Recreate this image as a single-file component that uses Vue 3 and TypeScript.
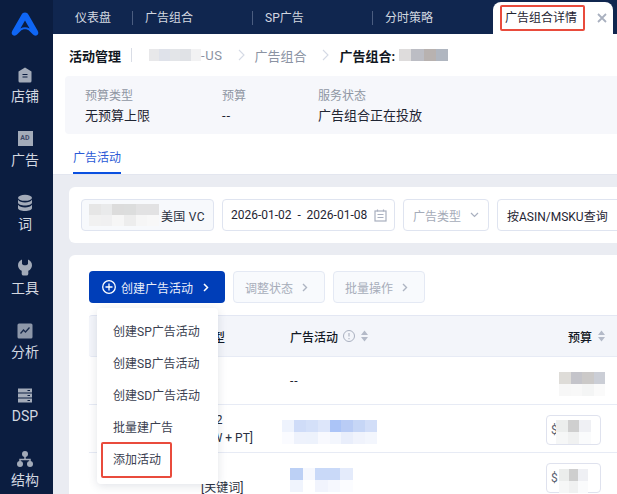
<script setup lang="ts">
const navTabs = ['仪表盘', '广告组合', 'SP广告', '分时策略']
const menu = ['创建SP广告活动', '创建SB广告活动', '创建SD广告活动', '批量建广告', '添加活动']

type Mosaic = { cols: number; w: number; h: number; cells: string[] }
const crumbBlur: Mosaic = { cols: 5, w: 10.4, h: 12, cells: ['#e8e8ea', '#dfe2ea', '#e3e5e8', '#e0e2e6', '#f2f2f3'] }
const groupBlur: Mosaic = { cols: 4, w: 12.25, h: 12, cells: ['#dedcdc', '#bcbdc4', '#b8b2b0', '#b0b6c0'] }
const storeBlur: Mosaic = {
  cols: 6, w: 11.67, h: 11,
  cells: ['#e6e6e6', '#e9eaeb', '#dcdcdc', '#dcdddd', '#e2e2e3', '#e2e2e3', '#f1f1f1', '#f0f0f1', '#f6f6f6', '#ededed', '#f6f6f6', '#f8f8f8']
}
const rowOneBudget: Mosaic = {
  cols: 4, w: 11.5, h: 12,
  cells: ['#dedcd8', '#c4c4ca', '#cbc9c8', '#cbced6', '#f7f7f7', '#f8f8f8', '#f4f5f5', '#fafafa']
}
const rowTwoName: Mosaic = {
  cols: 8, w: 11.9, h: 12,
  cells: ['#eef3fd', '#cfdcf8', '#d4e0f9', '#dde6fa', '#abc4f7', '#b9ccf5', '#c6d6f6', '#d2def8',
    '#fafbff', '#eef2fc', '#edf2fc', '#f8f9fe', '#f3f6fd', '#e9eefb', '#f0f3fc', '#f3f6fd']
}
const rowThreeName: Mosaic = {
  cols: 5, w: 12.6, h: 12,
  cells: ['#bcd0f5', '#f6f8fe', '#c9d9f8', '#c9d9f8', '#e4ebfb', '#f0f4fd', '#ffffff', '#f1f4fd', '#f6f8fe', '#fbfcff']
}
const budgetTwo: Mosaic = {
  cols: 3, w: 11.67, h: 12,
  cells: ['#eceeed', '#cfcfcf', '#eff0f4', '#f6f7f7', '#f0f1f1', '#fafbfc']
}
const budgetThree: Mosaic = {
  cols: 3, w: 9.5, h: 12,
  cells: ['#ebedec', '#cecece', '#eff0f4', '#f6f7f7', '#f0f1f1', '#fafbfc']
}
</script>

<template>
  <div class="app">
    <aside class="side">
      <div class="logo">
        <svg width="28" height="24" viewBox="0 0 28 24">
          <path d="M14 0.5c-1.6 0-2.7.8-3.5 2.3L1.3 18.8c-1.2 2.2-.6 4.1 1.2 4.7 1.5.5 2.7-.2 3.8-1.3l3-3c2.700-2.600 6.700-2.600 9.400 0l3 3c1.100 1.100 2.300 1.800 3.800 1.300 1.800-.6 2.400-2.500 1.200-4.700L17.500 2.800C16.700 1.300 15.600.5 14 .5zM14 8.500l4.600 8c-2.900-1.600-6.300-1.600-9.200 0z" fill="#0f66f5" fill-rule="evenodd" />
        </svg>
      </div>
      <div class="side-item">
        <svg class="ic" viewBox="0 0 18 18"><path d="M9 1.500 15.500 5.500V15a1.500 1.500 0 0 1-1.500 1.500H4A1.500 1.500 0 0 1 2.500 15V5.500z" fill="#a3abb9" /><path d="M6.500 8.500h5M6.500 11h5" stroke="#0b1d40" stroke-width="1.100" /></svg>
        <span>店铺</span>
      </div>
      <div class="side-item">
        <div class="ad-ic">AD</div>
        <span>广告</span>
      </div>
      <div class="side-item">
        <svg class="ic" viewBox="0 0 18 18" fill="#a3abb9"><ellipse cx="9" cy="3.800" rx="7" ry="3" /><path d="M2 5.800c1.200 1.800 3.800 2.700 7 2.700s5.800-.9 7-2.700v2.700c0 1.800-3.100 3.100-7 3.100s-7-1.300-7-3.100z" /><path d="M2 10.800c1.200 1.800 3.800 2.700 7 2.700s5.800-.9 7-2.700v3.200c0 1.800-3.100 3-7 3s-7-1.200-7-3z" /></svg>
        <span>词</span>
      </div>
      <div class="side-item">
        <svg class="ic" viewBox="0 0 18 18" fill="#a3abb9"><path d="M6 1.500v4.200c0 .8 1.300 1.500 3 1.500s3-.7 3-1.500V1.500c2.300.9 4 3.100 4 5.700 0 2.500-1.500 4.600-3.700 5.600V16a1.800 1.800 0 0 1-1.800 1.500h-3A1.800 1.800 0 0 1 5.700 16v-3.200C3.500 11.800 2 9.700 2 7.200c0-2.600 1.700-4.800 4-5.700z" /></svg>
        <span>工具</span>
      </div>
      <div class="side-item">
        <svg class="ic" viewBox="0 0 18 18"><rect x="1.500" y="1.500" width="15" height="15" rx="1.500" fill="#8d97a9" /><path d="M4.500 11.500 7.500 8l2 2 4-4.500" fill="none" stroke="#1a2b4c" stroke-width="1.300" /></svg>
        <span>分析</span>
      </div>
      <div class="side-item">
        <svg class="ic" viewBox="0 0 18 18" fill="#a3abb9"><path d="M2 2.500h14v4H2zM2 7.500h14v4H2zM2 12.500h14v4H2z" /><path d="M11.500 4.500h2.500M11.500 9.500h2.500M11.500 14.500h2.500" stroke="#0b1d40" stroke-width="1.200" /></svg>
        <span>DSP</span>
      </div>
      <div class="side-item">
        <svg class="ic" viewBox="0 0 18 18" fill="#a3abb9"><circle cx="9" cy="4" r="3" /><circle cx="4" cy="14" r="3" /><circle cx="14" cy="14" r="3" /><path d="M9 6v3M4 12V9.500h10V12" fill="none" stroke="#a3abb9" stroke-width="1.500" /></svg>
        <span>结构</span>
      </div>
    </aside>

    <div class="main">
      <nav class="tabs">
        <div v-for="t in navTabs" :key="t" class="tab">{{ t }}</div>
        <div class="tab-active">
          <span>广告组合详情</span>
          <svg class="tab-x" width="10" height="10" viewBox="0 0 10 10"><path d="M1 1l8 8M9 1l-8 8" stroke="#a9b0bf" stroke-width="1.800" /></svg>
          <i class="redbox tab-red"></i>
        </div>
      </nav>

      <div class="crumbs">
        <b class="crumb-title">活动管理</b>
        <i class="vline"></i>
        <div class="mosaic" :style="{ gridTemplateColumns: `repeat(${crumbBlur.cols}, ${crumbBlur.w}px)`, gridAutoRows: `${crumbBlur.h}px` }">
          <i v-for="(c, i) in crumbBlur.cells" :key="i" :style="{ background: c }"></i>
        </div>
        <span class="crumb-muted us">-US</span>
        <svg class="chev" width="7" height="12" viewBox="0 0 7 12"><path d="M1 1l5 5-5 5" fill="none" stroke="#d5dae5" stroke-width="1.100" /></svg>
        <span class="crumb-muted">广告组合</span>
        <svg class="chev" width="7" height="12" viewBox="0 0 7 12"><path d="M1 1l5 5-5 5" fill="none" stroke="#d5dae5" stroke-width="1.100" /></svg>
        <b class="crumb-cur">广告组合:</b>
        <div class="mosaic" :style="{ gridTemplateColumns: `repeat(${groupBlur.cols}, ${groupBlur.w}px)`, gridAutoRows: `${groupBlur.h}px` }">
          <i v-for="(c, i) in groupBlur.cells" :key="i" :style="{ background: c }"></i>
        </div>
      </div>

      <section class="info">
        <div class="info-col c1"><label>预算类型</label><p>无预算上限</p></div>
        <div class="info-col c2"><label>预算</label><p class="dashes">--</p></div>
        <div class="info-col"><label>服务状态</label><p>广告组合正在投放</p></div>
      </section>

      <div class="subtabs"><span class="subtab">广告活动</span></div>

      <div class="body">
        <section class="filter card">
          <div class="store">
            <div class="mosaic" :style="{ gridTemplateColumns: `repeat(${storeBlur.cols}, ${storeBlur.w}px)`, gridAutoRows: `${storeBlur.h}px` }">
              <i v-for="(c, i) in storeBlur.cells" :key="i" :style="{ background: c }"></i>
            </div>
            <span class="store-name">美国 VC</span>
          </div>
          <div class="field date">
            <span>2026-01-02</span><span class="dash">-</span><span>2026-01-08</span>
            <svg class="cal" width="13" height="13" viewBox="0 0 13 13" fill="none" stroke="#a9b0bf" stroke-width="1.200"><rect x="1" y="2" width="11" height="10" /><path d="M3.500 0.500v2M9.500 .5v2M3.500 5.500h6M3.500 8.500h6" /></svg>
          </div>
          <div class="field type">
            <span>广告类型</span>
            <svg width="9" height="6" viewBox="0 0 9 6"><path d="M1 1l3.500 3.500L8 1" fill="none" stroke="#a9b0bf" stroke-width="1.200" /></svg>
          </div>
          <div class="field query">按ASIN/MSKU查询</div>
        </section>

        <section class="table-card card">
          <div class="actions">
            <button class="primary">
              <svg width="14" height="14" viewBox="0 0 14 14" fill="none" stroke="#fff" stroke-width="1.300"><circle cx="7" cy="7" r="6.300" /><path d="M7 3.500v7M3.500 7h7" /></svg>
              <span>创建广告活动</span>
              <svg class="bchev" width="6" height="9" viewBox="0 0 6 9"><path d="M1 1l3.500 3.500L1 8" fill="none" stroke="#fff" stroke-width="1.500" /></svg>
            </button>
            <button class="ghost">
              <span>调整状态</span>
              <svg width="6" height="9" viewBox="0 0 6 9"><path d="M1 1l3.500 3.500L1 8" fill="none" stroke="#aeb5c2" stroke-width="1.400" /></svg>
            </button>
            <button class="ghost">
              <span>批量操作</span>
              <svg width="6" height="9" viewBox="0 0 6 9"><path d="M1 1l3.500 3.500L1 8" fill="none" stroke="#aeb5c2" stroke-width="1.400" /></svg>
            </button>
          </div>

          <div class="table">
            <div class="row head">
              <div></div>
              <div class="th">类型</div>
              <div class="th">
                广告活动
                <svg class="help" width="12" height="12" viewBox="0 0 12 12" fill="none" stroke="#a9b0bf"><circle cx="6" cy="6" r="5.500" /><path d="M6 3v3.500M6 8v1.200" stroke-width="1.100" /></svg>
                <svg class="sort" width="7" height="12" viewBox="0 0 7 12" fill="#b4bac8"><path d="M3.500 .5 7 5H0zM3.500 11.500 0 7h7z" /></svg>
              </div>
              <div class="th right head-budget">
                预算
                <svg class="sort" width="7" height="12" viewBox="0 0 7 12" fill="#b4bac8"><path d="M3.500 .5 7 5H0zM3.500 11.500 0 7h7z" /></svg>
              </div>
            </div>
            <div class="row r1">
              <div></div>
              <div></div>
              <div class="td dashes">--</div>
              <div class="td right r1-budget">
                <div class="mosaic" :style="{ gridTemplateColumns: `repeat(${rowOneBudget.cols}, ${rowOneBudget.w}px)`, gridAutoRows: `${rowOneBudget.h}px` }">
                  <i v-for="(c, i) in rowOneBudget.cells" :key="i" :style="{ background: c }"></i>
                </div>
              </div>
            </div>
            <div class="row r2">
              <div></div>
              <div class="td stack"><span>SP2</span><span>[KW + PT]</span></div>
              <div class="td name-two">
                <div class="mosaic" :style="{ gridTemplateColumns: `repeat(${rowTwoName.cols}, ${rowTwoName.w}px)`, gridAutoRows: `${rowTwoName.h}px` }">
                  <i v-for="(c, i) in rowTwoName.cells" :key="i" :style="{ background: c }"></i>
                </div>
              </div>
              <div class="td right budget-cell">
                <div class="money">
                  <span class="dollar">$</span>
                  <div class="mosaic" :style="{ gridTemplateColumns: `repeat(${budgetTwo.cols}, ${budgetTwo.w}px)`, gridAutoRows: `${budgetTwo.h}px` }">
                    <i v-for="(c, i) in budgetTwo.cells" :key="i" :style="{ background: c }"></i>
                  </div>
                </div>
              </div>
            </div>
            <div class="row r3">
              <div></div>
              <div class="td stack"><span>SP</span><span>[关键词]</span></div>
              <div class="td name-three">
                <div class="mosaic" :style="{ gridTemplateColumns: `repeat(${rowThreeName.cols}, ${rowThreeName.w}px)`, gridAutoRows: `${rowThreeName.h}px` }">
                  <i v-for="(c, i) in rowThreeName.cells" :key="i" :style="{ background: c }"></i>
                </div>
              </div>
              <div class="td right budget-cell">
                <div class="money">
                  <span class="dollar wide">$</span>
                  <div class="mosaic" :style="{ gridTemplateColumns: `repeat(${budgetThree.cols}, ${budgetThree.w}px)`, gridAutoRows: `${budgetThree.h}px` }">
                    <i v-for="(c, i) in budgetThree.cells" :key="i" :style="{ background: c }"></i>
                  </div>
                </div>
              </div>
            </div>
          </div>

          <div class="menu">
            <div v-for="m in menu" :key="m" class="menu-item">{{ m }}</div>
            <i class="redbox menu-red"></i>
          </div>
        </section>
      </div>
    </div>
  </div>
</template>

<style>
html, body { margin: 0; overflow: hidden; }
</style>

<style scoped>
.app {
  display: flex;
  width: 617px;
  height: 494px;
  overflow: hidden;
  background: #fff;
  font-family: Roboto, "Noto Sans CJK SC", sans-serif;
  font-size: 12px;
  color: #1f2533;
}
.side {
  flex: 0 0 53px;
  box-sizing: border-box;
  padding-right: 3px;
  background: #0b1d40;
  color: #d3d8e0;
  display: flex;
  flex-direction: column;
  align-items: center;
  overflow: hidden;
}
.logo {
  flex: none;
  height: 54px;
  padding-top: 12px;
  box-sizing: border-box;
}
.logo svg { display: block; }
.side-item {
  height: 64px;
  flex: none;
  box-sizing: border-box;
  padding-top: 12px;
  display: flex;
  flex-direction: column;
  align-items: center;
  gap: 2px;
  font-size: 14px;
  line-height: 20px;
}
.ic { width: 18px; height: 18px; display: block; }
.ad-ic {
  width: 15px;
  height: 15px;
  margin: 1px 0 2px;
  background: #a3abb9;
  color: #3f4a6a;
  font-size: 7px;
  font-weight: 700;
  line-height: 15px;
  text-align: center;
}
.main {
  flex: 1;
  min-width: 0;
  display: flex;
  flex-direction: column;
}
.tabs {
  height: 34px;
  flex: none;
  background: #10264f;
  display: flex;
  color: #d3d8e0;
  line-height: 36px;
}
.tab {
  position: relative;
  width: 120px;
  box-sizing: border-box;
  padding-left: 13px;
}
.tab:first-child { width: 79px; padding-left: 22px; }
.tab:not(:first-child)::before {
  content: "";
  position: absolute;
  left: 0;
  top: 11px;
  height: 14px;
  width: 1px;
  background: #4b5d80;
}
.tab-active {
  position: relative;
  width: 120px;
  margin: 2px 0 0 1px;
  box-sizing: border-box;
  padding-left: 12px;
  height: 32px;
  background: #fff;
  border-radius: 8px 8px 0 0;
  color: #1f2533;
  line-height: 32px;
}
.tab-x { position: absolute; left: 104px; top: 11px; }
.redbox {
  position: absolute;
  box-sizing: border-box;
  border: 2px solid #e94b3c;
  border-radius: 2px;
}
.tab-red { left: 7px; top: 3px; width: 85px; height: 26px; }
.crumbs {
  height: 42px;
  flex: none;
  display: flex;
  align-items: center;
  font-size: 13px;
  padding-left: 16px;
}
.crumb-title { font-weight: 700; color: #111722; }
.vline { width: 1px; height: 14px; background: #d9dde6; margin: 0 17px 0 10px; }
.mosaic { display: grid; }
.mosaic i { display: block; }
.crumb-muted { color: #8b93a3; }
.us { letter-spacing: 0.6px; }
.chev { margin: 0 10px 0 15px; }
.crumb-cur { font-weight: 700; color: #111722; margin: 0 4px 0 1px; }
.info {
  height: 58px;
  flex: none;
  margin-left: 12px;
  background: #f6f7fb;
  border-radius: 4px 0 0 4px;
  display: flex;
  box-sizing: border-box;
  padding: 11px 0 0 20px;
}
.info-col label { display: block; line-height: 18px; color: #8f96a3; }
.info-col p { margin: 1px 0 0; font-size: 13px; line-height: 20px; color: #1f2533; }
.dashes { letter-spacing: 1px; }
.c1 { width: 137px; }
.c2 { width: 96px; }
.subtabs {
  height: 41px;
  flex: none;
  box-sizing: border-box;
  border-bottom: 1px solid #e3e6ef;
  padding-left: 20px;
}
.subtab {
  display: block;
  width: 48px;
  height: 40px;
  box-sizing: border-box;
  padding-top: 15px;
  line-height: 18px;
  color: #2a5ad6;
  border-bottom: 2px solid #0a50e0;
}
.body {
  flex: 1;
  min-height: 0;
  background: #eaecf2;
  padding: 12px 0 0 16px;
  overflow: hidden;
}
.card {
  width: 548px;
  background: #fff;
  border-radius: 6px 0 0 6px;
  box-sizing: border-box;
}
.filter {
  height: 56px;
  display: flex;
  align-items: center;
  gap: 8px;
  padding-left: 12px;
  margin-bottom: 12px;
}
.store, .field {
  flex: none;
  height: 32px;
  box-sizing: border-box;
  border: 1px solid #dfe4f0;
  border-radius: 4px;
  display: flex;
  align-items: center;
}
.store {
  width: 133px;
  padding-left: 7px;
  background: #f7f9fc;
}
.store-name { margin-left: 2px; color: #2a3040; letter-spacing: 0.3px; }
.date { width: 173px; padding-left: 8px; position: relative; }
.dash { width: 15px; text-align: center; }
.cal { position: absolute; right: 7px; top: 9px; }
.type { width: 86px; padding-left: 9px; justify-content: flex-start; gap: 9px; color: #a5abb8; }
.query { width: 130px; padding-left: 9px; }
.table-card {
  position: relative;
  height: 260px;
  padding: 16px 0 0 20px;
}
.actions { display: flex; gap: 8px; height: 32px; }
button {
  font: inherit;
  height: 32px;
  box-sizing: border-box;
  border-radius: 4px;
  display: flex;
  align-items: center;
  padding: 0;
}
.primary {
  width: 136px;
  background: #003eb8;
  border: 0;
  color: #e9eefa;
  padding-left: 13px;
  gap: 5px;
}
.bchev { margin-left: 5px; }
.ghost {
  width: 92px;
  background: #f8fafd;
  border: 1px solid #e4e9f4;
  color: #a7adba;
  padding-left: 11px;
  gap: 9px;
}
.table { margin-top: 12px; }
.row {
  display: grid;
  grid-template-columns: 112px 89px 1fr 87px;
  border-bottom: 1px solid #e7ebf5;
  box-sizing: border-box;
  align-items: center;
}
.head {
  height: 42px;
  background: #f3f5fa;
  border-top: 1px solid #e3e7f3;
  border-bottom: 1px solid #e7ebf5;
  border-radius: 3px 0 0 3px;
}
.th {
  font-weight: 500;
  color: #131925;
  display: flex;
  align-items: center;
}
.help { margin-left: 5px; }
.sort { margin-left: 6px; }
.right { justify-content: flex-end; display: flex; }
.head-budget { padding-right: 12px; }
.r1, .r2 { height: 48px; }
.r3 { height: 48px; border-bottom: 0; }
.r1-budget { padding: 7px 12px 0 0; }
.stack { display: flex; flex-direction: column; line-height: 18px; color: #2a3040; }
.r3 .stack { padding-top: 3px; }
.name-two { margin: 7px 0 0 -8px; }
.name-three { margin-top: 6px; }
.budget-cell { padding: 2px 16px 0 0; }
.money {
  width: 55px;
  height: 30px;
  box-sizing: border-box;
  border: 1px solid #dfe2ee;
  border-radius: 4px;
  display: flex;
  align-items: center;
  padding-left: 4px;
  color: #5a6170;
}
.money .mosaic { margin-top: 5px; }
.dollar { width: 5px; }
.dollar.wide { width: 8px; }
.menu {
  position: absolute;
  left: 28px;
  top: 53px;
  width: 121px;
  height: 176px;
  box-sizing: border-box;
  padding-top: 8px;
  background: #fff;
  border-radius: 4px;
  box-shadow: 0 2px 10px rgba(40, 55, 95, 0.14);
}
.menu-item {
  height: 32px;
  line-height: 32px;
  padding-left: 16px;
  color: #3a4050;
}
.menu-red { left: 4px; top: 134px; width: 71px; height: 36px; }
</style>
